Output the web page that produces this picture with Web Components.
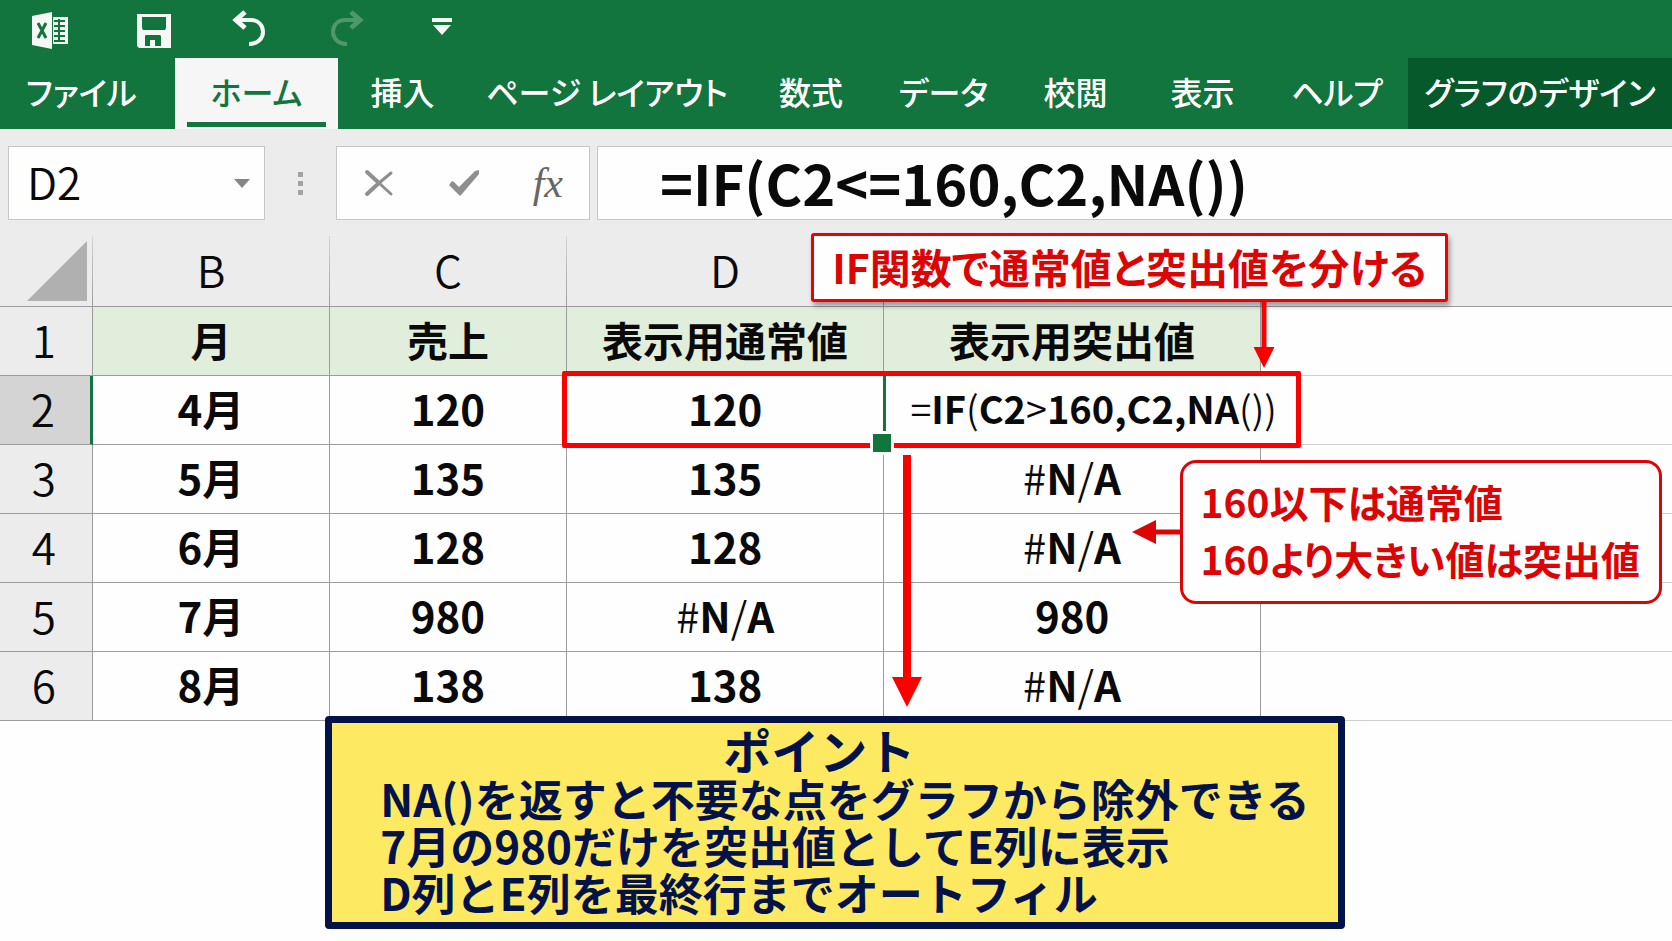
<!DOCTYPE html>
<html lang="ja">
<head>
<meta charset="UTF-8">
<meta name="viewport" content="width=device-width, initial-scale=1">
<title>IF関数で通常値と突出値を分ける</title>
<style>
    :root {
        --green: #12753d;
        --dark-green: #05592a;
        --panel: #ececec;
        --line: #9c9c9c;
        --red: #fb0000;
        --text-red: #dc0404;
        --navy: #04124a;
    }
    body {
        margin: 0;
        background: #fefefe;
        color: #0a0a0a;
        font-family: "Noto Sans CJK JP", "Noto Sans", sans-serif;
    }
</style>
</head>
<body>
<excel-app>
    <quick-bar slot="top"></quick-bar>
    <ribbon-tabs slot="top" tabs="ファイル|ホーム|挿入|ページ レイアウト|数式|データ|校閲|表示|ヘルプ|グラフのデザイン" active="ホーム"></ribbon-tabs>
    <formula-bar cell="D2" formula="=IF(C2&lt;=160,C2,NA())"></formula-bar>
    <sheet-grid>
        <range-box></range-box>
        <call-out class="title">IF関数で通常値と突出値を分ける</call-out>
        <arrow-mark class="to-cell" direction="down" length="66" shaft="5" head="21"></arrow-mark>
        <arrow-mark class="fill-down" direction="down" length="252" shaft="8" head="30"></arrow-mark>
        <call-out class="rule" rounded>160以下は通常値<br>160より大きい値は突出値</call-out>
        <arrow-mark class="to-value" direction="left" length="50" shaft="5" head="24"></arrow-mark>
        <point-box>
            <span slot="heading">ポイント</span>
            NA()を返すと不要な点をグラフから除外できる<br>
            7月の980だけを突出値としてE列に表示<br>
            D列とE列を最終行までオートフィル
        </point-box>
    </sheet-grid>
</excel-app>

<script>
class ExcelApp extends HTMLElement {
    constructor() {
        super();
        this.attachShadow({ mode: 'open' });
        this.shadowRoot.innerHTML = `
            <style>
                :host {
                    display: flex;
                    flex-direction: column;
                    min-height: 100vh;
                    overflow: hidden;
                }
                header {
                    background: var(--green);
                }
            </style>
            <header><slot name="top"></slot></header>
            <slot></slot>
        `;
    }
}
customElements.define('excel-app', ExcelApp);

class QuickBar extends HTMLElement {
    constructor() {
        super();
        this.attachShadow({ mode: 'open' });
        this.shadowRoot.innerHTML = `
            <style>
                :host {
                    display: flex;
                    align-items: center;
                    gap: 60px;
                    height: 60px;
                    margin-bottom: -2px;
                    padding: 0 32px;
                    box-sizing: border-box;
                    color: #f6f8f6;
                }
                .logo {
                    margin-right: 8px;
                }
                button {
                    padding: 0;
                    border: 0;
                    background: none;
                    color: inherit;
                    cursor: pointer;
                }
                button:disabled {
                    color: #4f986c;
                }
                svg {
                    display: block;
                    width: 36px;
                    height: 40px;
                }
            </style>
            <svg class="logo" viewBox="0 0 36 40" aria-label="Excel">
                <path fill="currentColor" d="M0 6 20 2v37L0 35z"/>
                <path fill="currentColor" d="M21 7h15v27H21z"/>
                <path fill="none" stroke="#12753d" stroke-width="3" d="m6 13 8 15m0-15L6 28"/>
                <path fill="none" stroke="#12753d" stroke-width="2" d="M22 11h4m2 0h5m-11 5h4m2 0h5m-11 5h4m2 0h5m-11 5h4m2 0h5m-11 5h4m2 0h5M27 9v23"/>
            </svg>
            <button aria-label="上書き保存">
                <svg viewBox="0 0 36 40">
                    <path fill="currentColor" fill-rule="evenodd" d="M1 4h34v34H3l-2-2zm5 3v11l1 2h22l1-2V7zm4 18-1 1v10h5v-6h5v6h6V26l-1-1z"/>
                </svg>
            </button>
            <button aria-label="元に戻す">
                <svg viewBox="0 0 36 40" fill="none" stroke="currentColor">
                    <path stroke-width="5" d="M13 2 4 10l9 8"/><path stroke-width="4" d="M4 10h15c8 0 12 6 12 12s-5 12-14 12"/>
                </svg>
            </button>
            <button aria-label="やり直し" disabled>
                <svg viewBox="0 0 36 40" fill="none" stroke="currentColor">
                    <path stroke-width="5" d="m23 2 9 8-9 8"/><path stroke-width="4" d="M32 10H17C9 10 5 16 5 22s5 12 14 12"/>
                </svg>
            </button>
            <button aria-label="クイック アクセス ツール バーのカスタマイズ">
                <svg viewBox="0 0 36 40" fill="currentColor">
                    <path d="M8 8h20v4H8zm1 7h18l-9 10z"/>
                </svg>
            </button>
        `;
    }
}
customElements.define('quick-bar', QuickBar);

class RibbonTabs extends HTMLElement {
    constructor() {
        super();
        this.attachShadow({ mode: 'open' });
        this.shadowRoot.innerHTML = `
            <style>
                :host {
                    display: block;
                }
                nav {
                    display: grid;
                    grid-template-columns: 175fr 163fr 129fr 280fr 128fr 137fr 127fr 127fr 142fr 264fr;
                    height: 71px;
                }
                button {
                    position: relative;
                    min-width: 0;
                    padding: 0 0 5px;
                    border: 0;
                    background: none;
                    color: #fff;
                    font: 500 32px/1 "Noto Sans CJK JP", sans-serif;
                    font-feature-settings: "palt";
                    white-space: nowrap;
                    cursor: pointer;
                }
                button:first-child {
                    padding-left: 26px;
                    text-align: left;
                }
                button:last-child {
                    background: var(--dark-green);
                }
                button[aria-selected="true"] {
                    background: #f6f6f6;
                    color: var(--green);
                }
                button[aria-selected="true"]::after {
                    content: "";
                    position: absolute;
                    inset: auto 12px 2px;
                    height: 5px;
                    background: var(--green);
                }
            </style>
            <nav role="tablist"></nav>
        `;
    }
    connectedCallback() {
        const nav = this.shadowRoot.querySelector('nav');
        const active = this.getAttribute('active');
        (this.getAttribute('tabs') || '').split('|').forEach(name => {
            const tab = document.createElement('button');
            tab.setAttribute('role', 'tab');
            tab.setAttribute('aria-selected', name === active);
            tab.textContent = name;
            nav.appendChild(tab);
        });
    }
}
customElements.define('ribbon-tabs', RibbonTabs);

class FormulaBar extends HTMLElement {
    constructor() {
        super();
        this.attachShadow({ mode: 'open' });
        this.shadowRoot.innerHTML = `
            <style>
                :host {
                    display: flex;
                    padding: 17px 0 16px 8px;
                    background: var(--panel);
                }
                .name, .tools, .formula {
                    display: flex;
                    align-items: center;
                    height: 74px;
                    box-sizing: border-box;
                    border: 1px solid #c6c6c6;
                    background: #fefefe;
                }
                .name {
                    flex: none;
                    width: 257px;
                    padding: 0 14px 0 18px;
                }
                .tools {
                    flex: none;
                    width: 254px;
                    padding: 0 26px;
                    justify-content: space-between;
                }
                .formula {
                    flex: 1;
                    min-width: 0;
                    margin-left: 7px;
                    padding-left: 62px;
                    border-right: 0;
                }
                .dots {
                    flex: none;
                    width: 71px;
                    display: flex;
                    flex-direction: column;
                    align-items: center;
                    justify-content: center;
                    gap: 4px;
                }
                .dots i {
                    width: 5px;
                    height: 5px;
                    background: #a3a3a3;
                }
                input {
                    flex: 1;
                    min-width: 0;
                    height: 70px;
                    padding: 0 0 4px;
                    box-sizing: border-box;
                    border: 0;
                    outline: 0;
                    background: none;
                    color: inherit;
                    font-family: inherit;
                }
                .name input {
                    font-size: 44px;
                    font-weight: 350;
                }
                .formula input {
                    font-size: 56px;
                    font-weight: 700;
                }
                button {
                    padding: 0;
                    border: 0;
                    background: none;
                    color: #8f8f8f;
                    cursor: pointer;
                }
                .fx {
                    color: #666;
                    font: italic 42px/1 "Liberation Serif", serif;
                }
                svg {
                    display: block;
                }
            </style>
            <div class="name">
                <input class="cell" aria-label="名前ボックス">
                <button aria-label="セル一覧">
                    <svg width="16" height="9" fill="#858585"><path d="M0 0h16L8 9z"/></svg>
                </button>
            </div>
            <div class="dots"><i></i><i></i><i></i></div>
            <div class="tools">
                <button aria-label="キャンセル">
                    <svg width="32" height="30" fill="none" stroke="currentColor" stroke-linecap="round">
                        <path stroke-width="4" d="m4 4 12 11L4 26"/><path stroke-width="3" d="m16 15 12 11M16 15 28 5"/>
                    </svg>
                </button>
                <button aria-label="入力">
                    <svg width="32" height="30" fill="currentColor"><path d="m1 17 3-4 2 1 5 5L27 3l4-1v4L14 26l-2 2z"/></svg>
                </button>
                <button class="fx" aria-label="関数の挿入">fx</button>
            </div>
            <div class="formula"><input class="text" aria-label="数式バー"></div>
        `;
    }
    connectedCallback() {
        this.shadowRoot.querySelector('.cell').value = this.getAttribute('cell') || '';
        this.shadowRoot.querySelector('.text').value = this.getAttribute('formula') || '';
    }
}
customElements.define('formula-bar', FormulaBar);

class SheetGrid extends HTMLElement {
    constructor() {
        super();
        this.attachShadow({ mode: 'open' });
        this.shadowRoot.innerHTML = `
            <style>
                :host {
                    display: block;
                    position: relative;
                }
                table {
                    width: 100%;
                    table-layout: fixed;
                    border-collapse: separate;
                    border-spacing: 0;
                    text-align: center;
                    white-space: nowrap;
                    line-height: 1;
                }
                th, td {
                    height: 69px;
                    padding: 0 0 4px;
                    box-sizing: border-box;
                    border: solid var(--line);
                    border-width: 0 1px 1px 0;
                    font-size: 42px;
                    font-weight: 700;
                }
                thead th {
                    height: 71px;
                    background: var(--panel);
                    border-image: linear-gradient(#d6d6d6, var(--line)) 1;
                }
                thead th, tbody th {
                    font-size: 44px;
                    font-weight: 350;
                }
                tbody th {
                    background: var(--panel);
                    padding-right: 4px;
                }
                tbody th.selected {
                    background: #d4d4d4;
                    border-right: 3px solid var(--green);
                }
                .label td {
                    background: #e1eedb;
                    font-size: 41px;
                }
                td:last-child, .label td:last-child {
                    background: none;
                    border-color: #cfcfcf;
                    border-right: 0;
                }
                thead th:last-child {
                    border-right: 0;
                }
                td.formula {
                    padding-left: 26px;
                    border-right-color: transparent;
                    font-size: 38px;
                    text-align: left;
                }
                .thin {
                    font-weight: 350;
                }
                .corner {
                    padding: 0;
                }
                .corner svg {
                    display: block;
                    margin: 0 5px 0 auto;
                }
            </style>
            <table>
                <colgroup>
                    <col style="width: 5.55%"><col style="width: 14.2%"><col style="width: 14.15%">
                    <col style="width: 19%"><col style="width: 22.5%"><col>
                </colgroup>
                <thead><tr>
                    <th class="corner"><svg width="60" height="60" fill="#b0b0b0"><path d="M60 0v60H0z"/></svg></th>
                    <th>B</th><th>C</th><th>D</th><th></th><th></th>
                </tr></thead>
                <tbody></tbody>
            </table>
            <slot></slot>
        `;
    }
    connectedCallback() {
        const rows = [
            ['月', '売上', '表示用通常値', '表示用突出値'],
            ['4月', '120', '120', '=IF(C2>160,C2,NA())'],
            ['5月', '135', '135', '#N/A'],
            ['6月', '128', '128', '#N/A'],
            ['7月', '980', '#N/A', '980'],
            ['8月', '138', '138', '#N/A']
        ];
        const body = this.shadowRoot.querySelector('tbody');
        rows.forEach((row, i) => {
            const tr = body.insertRow();
            if (i === 0) tr.className = 'label';
            tr.innerHTML = `<th scope="row"${i === 1 ? ' class="selected"' : ''}>${i + 1}</th>`;
            row.forEach(value => {
                const td = tr.insertCell();
                if (value[0] === '=') td.className = 'formula';
                // operators and brackets are set lighter than names and numbers
                value.split(/([=()>#/]+)/).forEach(part => {
                    if (!part) return;
                    const span = document.createElement('span');
                    if (/^[=()>#/]/.test(part)) span.className = 'thin';
                    span.textContent = part;
                    td.appendChild(span);
                });
            });
            tr.insertCell();
        });
    }
}
customElements.define('sheet-grid', SheetGrid);

// Red frame round D2:E2 with the fill handle of the active cell
class RangeBox extends HTMLElement {
    constructor() {
        super();
        this.attachShadow({ mode: 'open' });
        this.shadowRoot.innerHTML = `
            <style>
                :host {
                    position: absolute;
                    top: 135px;
                    left: 33.6%;
                    width: 44.2%;
                    height: 77px;
                    box-sizing: border-box;
                    border: 5px solid var(--red);
                    border-radius: 2px;
                }
                .edge {
                    position: absolute;
                    top: 0;
                    bottom: 11px;
                    left: 43.4%;
                    width: 3px;
                    background: var(--green);
                }
                .handle {
                    position: absolute;
                    bottom: -12px;
                    left: calc(43.4% - 13px);
                    width: 18px;
                    height: 18px;
                    border: 3px solid #fefefe;
                    background: var(--green);
                }
            </style>
            <div class="edge"></div>
            <div class="handle"></div>
        `;
    }
}
customElements.define('range-box', RangeBox);

class CallOut extends HTMLElement {
    constructor() {
        super();
        this.attachShadow({ mode: 'open' });
        this.shadowRoot.innerHTML = `
            <style>
                :host {
                    position: absolute;
                    box-sizing: border-box;
                    border: 3px solid #ee0000;
                    border-radius: 3px;
                    background: #fefefe;
                    color: var(--text-red);
                    font-weight: 700;
                    font-feature-settings: "palt";
                    white-space: nowrap;
                }
                :host(.title) {
                    top: -3px;
                    left: 48.5%;
                    width: 38.1%;
                    padding-bottom: 2px;
                    font-size: 41px;
                    line-height: 61px;
                    text-align: center;
                    box-shadow: 2px 4px 5px rgba(0, 0, 0, 0.35);
                }
                :host(.rule) {
                    top: 224px;
                    left: 70.6%;
                    width: 28.8%;
                    padding: 10px 17px 14px;
                    font-size: 39px;
                    line-height: 57px;
                }
                :host([rounded]) {
                    border-color: var(--text-red);
                    border-radius: 16px;
                }
            </style>
            <slot></slot>
        `;
    }
}
customElements.define('call-out', CallOut);

class ArrowMark extends HTMLElement {
    constructor() {
        super();
        this.attachShadow({ mode: 'open' });
        this.shadowRoot.innerHTML = `
            <style>
                :host {
                    position: absolute;
                    transform: translateX(-50%);
                    color: var(--red);
                }
                :host(.to-cell) {
                    top: 66px;
                    left: 75.6%;
                }
                :host(.fill-down) {
                    top: 219px;
                    left: 54.25%;
                }
                :host(.to-value) {
                    top: 284px;
                    left: 69.2%;
                    color: var(--text-red);
                }
                svg {
                    display: block;
                    fill: currentColor;
                }
            </style>
            <svg><path/></svg>
        `;
    }
    connectedCallback() {
        const length = Number(this.getAttribute('length'));
        const shaft = Number(this.getAttribute('shaft'));
        const head = Number(this.getAttribute('head'));
        const a = (head - shaft) / 2;
        const b = a + shaft;
        const svg = this.shadowRoot.querySelector('svg');
        const path = svg.querySelector('path');
        if (this.getAttribute('direction') === 'left') {
            svg.setAttribute('width', length);
            svg.setAttribute('height', head);
            path.setAttribute('d', `M0 ${head / 2}L${head} 0V${a}H${length}V${b}H${head}V${head}z`);
        } else {
            const neck = length - head;
            svg.setAttribute('width', head);
            svg.setAttribute('height', length);
            path.setAttribute('d', `M${a} 0H${b}V${neck}H${head}L${head / 2} ${length}L0 ${neck}H${a}z`);
        }
    }
}
customElements.define('arrow-mark', ArrowMark);

class PointBox extends HTMLElement {
    constructor() {
        super();
        this.attachShadow({ mode: 'open' });
        this.shadowRoot.innerHTML = `
            <style>
                :host {
                    position: absolute;
                    top: 480px;
                    left: 19.45%;
                    width: 61%;
                    box-sizing: border-box;
                    padding: 0 0 6px 48px;
                    border: 7px solid var(--navy);
                    border-radius: 4px;
                    background: #feea62;
                    color: var(--navy);
                    font-size: 44px;
                    font-weight: 700;
                    line-height: 47px;
                    white-space: nowrap;
                }
                h2 {
                    margin: 0 80px 0 0;
                    font-size: 48px;
                    line-height: 52px;
                    text-align: center;
                }
            </style>
            <h2><slot name="heading"></slot></h2>
            <slot></slot>
        `;
    }
}
customElements.define('point-box', PointBox);
</script>
</body>
</html>
